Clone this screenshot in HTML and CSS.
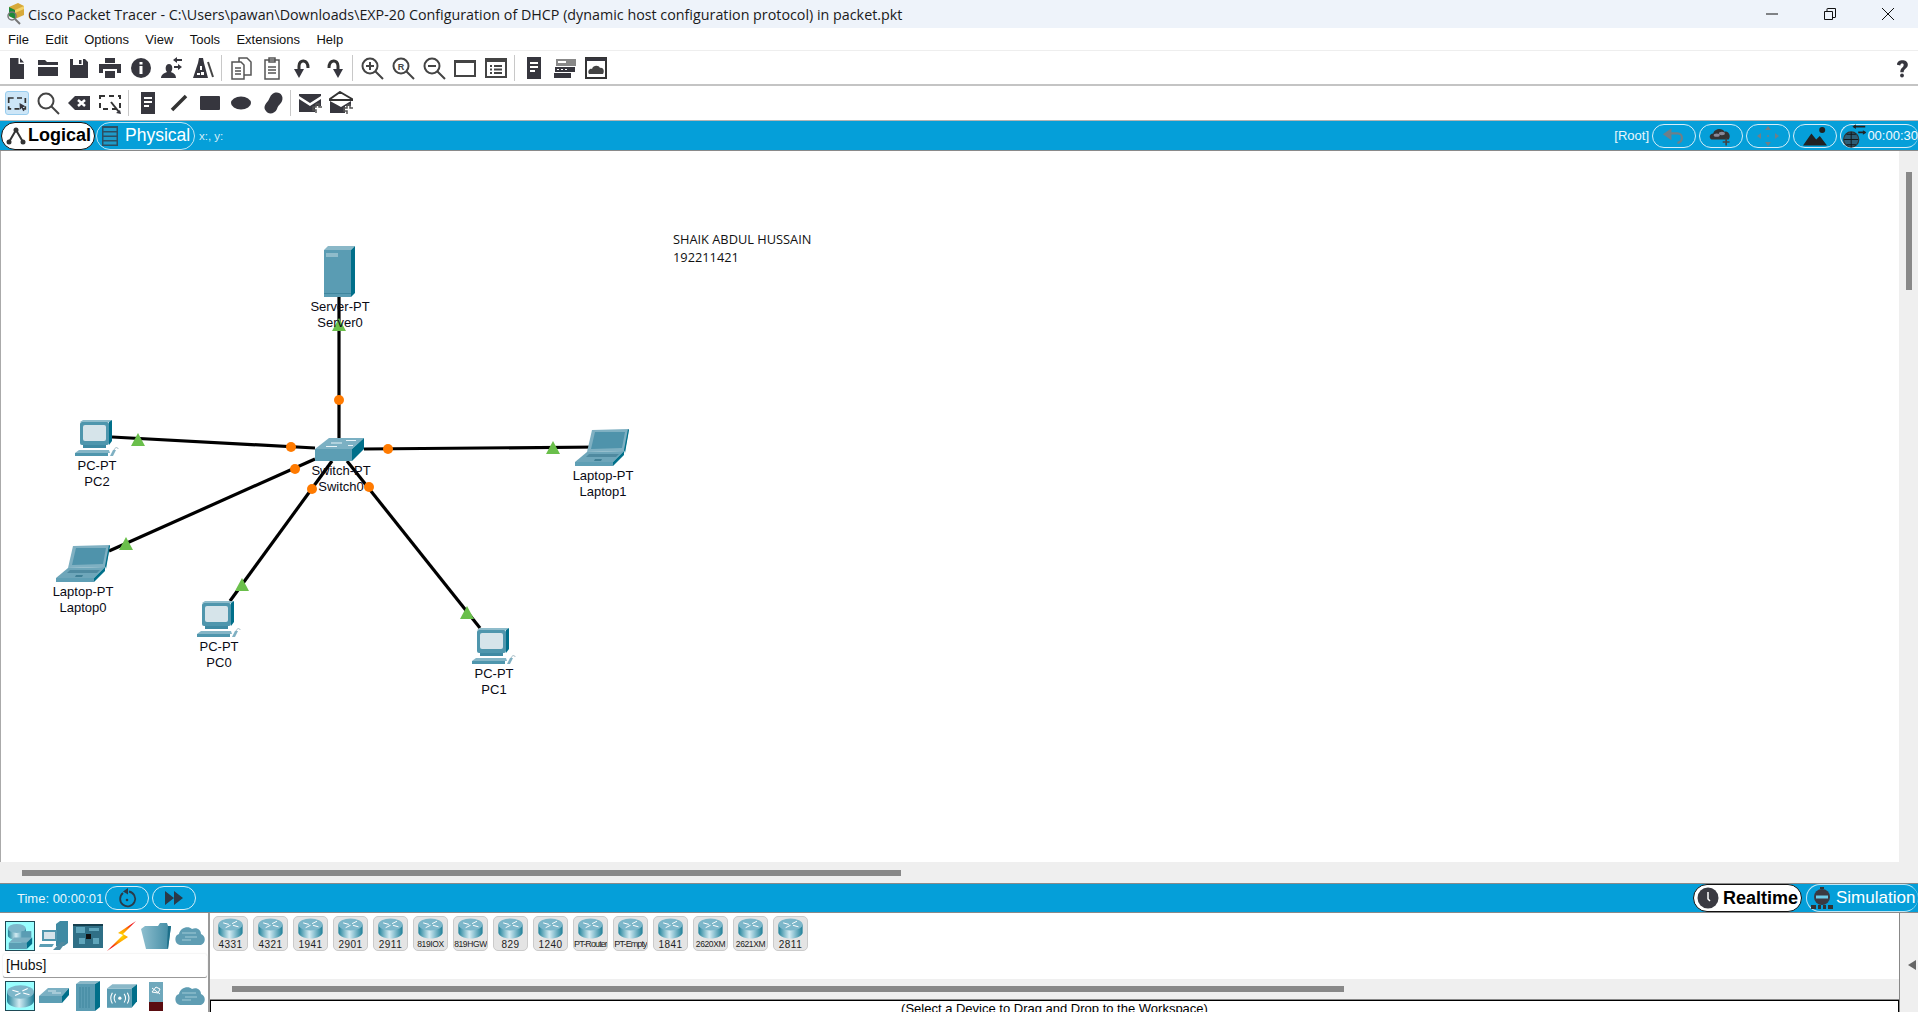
FILE: index.html
```html
<!DOCTYPE html>
<html lang="en">
<head>
<meta charset="utf-8">
<title>Cisco Packet Tracer</title>
<link rel="stylesheet" href="styles.css">
</head>
<body>
<svg class="sprite" width="0" height="0" aria-hidden="true">
  <defs>
    <linearGradient id="cyl" x1="0" x2="1" y1="0" y2="0">
      <stop offset="0" stop-color="#1f8199"/><stop offset=".45" stop-color="#d3ebf2"/><stop offset=".62" stop-color="#9ccbd9"/><stop offset="1" stop-color="#1f7f98"/>
    </linearGradient>
    <linearGradient id="teal" x1="0" x2="1" y1="0" y2="0">
      <stop offset="0" stop-color="#8fbfcf"/><stop offset="1" stop-color="#3f8aa3"/>
    </linearGradient>
    <radialGradient id="bolt"><stop offset="0" stop-color="#ffe000"/><stop offset=".55" stop-color="#ff8a00"/><stop offset="1" stop-color="#f01010"/></radialGradient>

    <symbol id="router" viewBox="0 0 30 26">
      <path d="M0 8v10c0 4 7 7.500 15 7.500S30 22 30 18V8z" fill="url(#cyl)"/>
      <ellipse cx="15" cy="8" rx="15" ry="7.500" fill="#7db7ca"/>
      <path d="M6 6l7 2M9 12l6-3M17 7l6-3M18 9l7 2" stroke="#fff" stroke-width="1.200" fill="none"/>
    </symbol>
    <symbol id="server" viewBox="0 0 31 51">
      <path d="M0 4L4 0H31L27 4z" fill="#8ab8c8"/><path d="M27 4L31 0V47L27 51z" fill="#006f8a"/>
      <rect y="4" width="27" height="47" fill="#5a9cb3"/><rect x="2" y="7" width="12" height="4" fill="#8fbccb"/><rect y="47" width="27" height="1" fill="#3f869e"/>
    </symbol>
    <symbol id="switch" viewBox="0 0 49 23">
      <path d="M0 11L14 0H49L37 11z" fill="#7bb0c3"/><rect y="11" width="37" height="12" fill="#5c9eb4"/><path d="M37 11L49 0V11L37 23z" fill="#006f8a"/>
      <path d="M16 5h11M31 2.500h10M11 8.500h11M33 7.500h5" stroke="#e8f4f8" stroke-width="1"/>
    </symbol>
    <symbol id="pc" viewBox="0 0 44 36">
      <path d="M5 2L8 0H37L34 2z" fill="#8fbccb"/><path d="M34 2L37 0V21L34 25z" fill="#006f8a"/>
      <rect x="5" y="2" width="29" height="23" rx="2" fill="#4f96ad"/><rect x="8" y="5" width="23" height="16" rx="2" fill="#d6e4ea"/>
      <rect x="8" y="25" width="23" height="3" fill="#3f8aa3"/><path d="M4 30H34L35 33H0z" fill="#84b5c6"/><rect y="33" width="33" height="3" fill="#4f96ad"/>
      <path d="M35 36l3-6h3l-3 6z" fill="#7fb0c2"/><path d="M39 30c1-3 4-3 4-1" stroke="#9fb8c2" fill="none"/>
    </symbol>
    <symbol id="laptop" viewBox="0 0 54 37">
      <path d="M17 1L54 0L50 22L12 23z" fill="#7fb0c2"/><path d="M20 3L50 3L47 19L16 20z" fill="#4f93ab"/><path d="M53 0L54 1L50 24L49 21z" fill="#00708a"/>
      <path d="M12 23L49 22L38 33H0z" fill="#6ea6ba"/><path d="M14 25H44L41 28H11z" fill="#4f8aa0"/><path d="M20 30h7l-1 2h-7z" fill="#3f7f95"/>
      <path d="M0 33H38V37H0z" fill="#5f9fb5"/><path d="M38 33L49 22V26L38 37z" fill="#00708a"/>
    </symbol>
    <symbol id="tri" viewBox="0 0 14 13"><path d="M7 0L14 13H0z" fill="#6abf4b"/></symbol>

    <symbol id="i-new" viewBox="0 0 24 24"><path d="M5 2h8.500v6H19v15H5zM15 2l4 4.500h-4z"/></symbol>
    <symbol id="i-open" viewBox="0 0 24 24"><path d="M2 4h7l2 2h11v3H2zM2 11h20v9H2z"/></symbol>
    <symbol id="i-save" viewBox="0 0 24 24"><path d="M3 3h3v6h10V3h2l3 3v16H3zM12 4h2.500v4H12z"/></symbol>
    <symbol id="i-print" viewBox="0 0 24 24"><path d="M7 2h10v5H7zM1 8h22v9h-4v-4H5v4H1zM7 15h10v7H7z"/></symbol>
    <symbol id="i-info" viewBox="0 0 24 24"><circle cx="12" cy="12" r="10"/><path d="M10.500 10h3v8h-3zM10.500 6h3v2.500h-3z" fill="#fff"/></symbol>
    <symbol id="i-wiz" viewBox="0 0 24 24"><path d="M1 22c0-3 3-5 6-6-2-2-2-8 2-8s4 6 2 8c2 1 5 2 5 6zM13 4l4-3v2h5v2h-5v2zM22 11l-4-3v2h-4v2h4v2z"/></symbol>
    <symbol id="i-pdu" viewBox="0 0 24 24"><path d="M8 2h4l1 5 4 15H2L7 7z"/><path d="M9 10h2v4H9zM6 17h3v2H6zM10 16h3v3h-3z" fill="#fff"/><path d="M17 6l5 15" stroke="#444" stroke-width="2"/></symbol>
    <symbol id="i-copy" viewBox="0 0 24 24"><g fill="none" stroke-width="1.500"><path d="M10 2h8l4 4v13H10z" stroke="#555"/><path d="M3 6h9l3 3v14H3z" fill="#fff" stroke="#555"/><path d="M6 12h6M6 15h6M6 18h6" stroke="#555"/></g></symbol>
    <symbol id="i-paste" viewBox="0 0 24 24"><g fill="none" stroke-width="1.500" stroke="#555"><path d="M5 4h14v19H5z"/><path d="M9 2h6v4H9zM8 11h8M8 14h8M8 17h8"/></g></symbol>
    <symbol id="i-undo" viewBox="0 0 24 24"><path d="M17 12c0-9-9-9-9-2v3" fill="none" stroke="#333" stroke-width="3"/><path d="M3 13h10l-5 9z"/></symbol>
    <symbol id="i-redo" viewBox="0 0 24 24"><path d="M7 12c0-9 9-9 9-2v3" fill="none" stroke="#333" stroke-width="3"/><path d="M11 13h10l-5 9z"/></symbol>
    <symbol id="i-zin" viewBox="0 0 24 24"><g fill="none" stroke="#444" stroke-width="2"><circle cx="10" cy="10" r="7.500"/><path d="M15.500 15.500L23 23M6 10h8M10 6v8"/></g></symbol>
    <symbol id="i-zr" viewBox="0 0 24 24"><g fill="none" stroke="#444" stroke-width="2"><circle cx="10" cy="10" r="7.500"/><path d="M15.500 15.500L23 23"/></g><text x="10" y="13.500" text-anchor="middle" class="ico-txt">R</text></symbol>
    <symbol id="i-zout" viewBox="0 0 24 24"><g fill="none" stroke="#444" stroke-width="2"><circle cx="10" cy="10" r="7.500"/><path d="M15.500 15.500L23 23M6 10h8"/></g></symbol>
    <symbol id="i-win" viewBox="0 0 24 24"><path d="M2 5h20v15H2z" fill="none" stroke="#444" stroke-width="2"/><path d="M2 4h20v3H2z" fill="#444"/></symbol>
    <symbol id="i-list" viewBox="0 0 24 24"><path d="M2 3h20v18H2z" fill="none" stroke="#444" stroke-width="2"/><path d="M2 3h20v3H2zM6 9h2v2H6zM10 9h8v2h-8zM6 12.500h2v2H6zM10 12.500h8v2h-8zM6 16h2v2H6zM10 16h8v2h-8z" fill="#444"/></symbol>
    <symbol id="i-note" viewBox="0 0 24 24"><path d="M5 1h14v22H5z"/><path d="M8 6h8v2H8zM8 10h8v2H8zM8 14h5v2H8z" fill="#fff"/></symbol>
    <symbol id="i-inv" viewBox="0 0 24 24"><path d="M3 3h20v7H3z" fill="#888"/><path d="M5 5h8v2H5z" fill="#fff"/><path d="M2 11h20v5H2zM1 17h17v5H1z"/><path d="M4 13h2v1H4zM8 13h2v1H8zM12 13h2v1h-2z" fill="#fff"/></symbol>
    <symbol id="i-cld" viewBox="0 0 24 24"><path d="M2 2h20v20H2z" fill="#fff" stroke="#333" stroke-width="2"/><path d="M2 2h20v3H2z"/><path d="M5 18c-2-3 1-6 3-5 1-4 7-4 8-1 3-1 5 3 3 6z" fill="#444"/></symbol>
    <symbol id="i-sel" viewBox="0 0 24 24"><path d="M2 6h20v13H2z" fill="none" stroke="#333" stroke-width="2" stroke-dasharray="6 4"/><path d="M15 12l7 4-3 1 2 4-1.500 1-2-4-2 2z"/></symbol>
    <symbol id="i-mag" viewBox="0 0 24 24"><g fill="none" stroke="#444" stroke-width="2"><circle cx="10" cy="10" r="7.500"/><path d="M15.500 15.500L23 23"/></g></symbol>
    <symbol id="i-del" viewBox="0 0 24 24"><path d="M8 5h15v14H8L1 12z"/><path d="M11 9l7 6M18 9l-7 6" stroke="#fff" stroke-width="2.500"/></symbol>
    <symbol id="i-res" viewBox="0 0 24 24"><path d="M2 5h20v13H2z" fill="none" stroke="#333" stroke-width="2" stroke-dasharray="5 4"/><path d="M13 11l8 10" stroke="#333" stroke-width="2"/><path d="M23 23l-5-1 4-3z"/></symbol>
    <symbol id="i-line" viewBox="0 0 24 24"><path d="M5 19L19 5" stroke="#333" stroke-width="3.500"/></symbol>
    <symbol id="i-rect" viewBox="0 0 24 24"><rect x="2" y="5" width="20" height="14" rx="1"/></symbol>
    <symbol id="i-ell" viewBox="0 0 24 24"><ellipse cx="12" cy="12" rx="10" ry="6.500"/></symbol>
    <symbol id="i-free" viewBox="0 0 24 24"><path d="M14 2c6-2 10 3 8 8-1 3-4 4-5 8-2 5-9 6-11 2-3-3-1-7 2-10 2-3 2-6 6-8z"/></symbol>
    <symbol id="i-mail" viewBox="0 0 24 24"><path d="M1 3h22v2L12 12 1 5zM1 8l11 7 11-7v7h-6v6H1z"/><path d="M19 15h3v3h3M19 15v3h-3v3h3v3" fill="none" stroke="#555" stroke-width="1.500" transform="translate(-1 -2)"/></symbol>
    <symbol id="i-mailo" viewBox="0 0 24 24"><path d="M11 1L23 8v1H1V8z" fill="none" stroke="#333" stroke-width="2"/><path d="M1 10l11 6 10-6v5h-6v7H1z"/><path d="M19 15h3v3h3M19 15v3h-3v3h3v3" fill="none" stroke="#555" stroke-width="1.500" transform="translate(-1 -1)"/></symbol>
    <symbol id="i-help" viewBox="0 0 24 24"><path d="M6 8c0-7 13-7 13 0 0 5-5 4-5 9h-4c0-6 4-5 4-9 0-2-4-2-4 1z"/><circle cx="12" cy="21" r="2.300"/></symbol>

    <symbol id="b-logical" viewBox="0 0 20 20"><path d="M10 4L3 16M10 4l7 12" stroke="#333" stroke-width="2" fill="none"/><circle cx="10" cy="4" r="2.500" fill="#333"/><circle cx="3" cy="16" r="2.500" fill="#333"/><circle cx="17" cy="16" r="2.500" fill="#333"/></symbol>
    <symbol id="b-rack" viewBox="0 0 16 20"><path d="M0 0h16v20H0z" fill="#2c4f63"/><path d="M1.500 2h13v3h-13zM1.500 6.500h13v3h-13zM1.500 11h13v3h-13zM1.500 15.500h13v3h-13z" fill="#1f9bc9"/></symbol>
    <symbol id="b-back" viewBox="0 0 28 20"><path d="M1 8L11 1v14z" fill="#6f7f88"/><path d="M10 7h8c7 0 7 10 0 11" fill="none" stroke="#6f7f88" stroke-width="2.500"/></symbol>
    <symbol id="b-cloud" viewBox="0 0 28 22"><path d="M3 15c-4-2-2-7 2-7 1-6 11-7 13-2 5-1 8 5 5 9z" fill="#333"/><ellipse cx="9" cy="10" rx="3.500" ry="2" fill="#889"/><ellipse cx="15" cy="8" rx="3.500" ry="2" fill="#889"/><path d="M20 14v8M16 18h8" stroke="#444" stroke-width="2"/></symbol>
    <symbol id="b-move" viewBox="0 0 22 20"><path d="M11 0l3 4H8zM11 20l-3-4h6zM0 10l4-3v6zM22 10l-4 3V7z" fill="#6f7f88"/><circle cx="11" cy="10" r="1" fill="#6f7f88"/></symbol>
    <symbol id="b-mount" viewBox="0 0 20 16"><path d="M0 16L7 6l4 5 3-3 6 8z" fill="#222"/><circle cx="16" cy="3" r="2.500" fill="#222"/></symbol>
    <symbol id="b-globe" viewBox="0 0 20 20"><circle cx="7" cy="13" r="6.500" fill="#2d5f78" stroke="#333"/><path d="M1 13h12M7 6.500v13M3 8.500h8M3 17.500h8" stroke="#111" stroke-width=".8" fill="none"/><path d="M10 2h9M13 7h6" stroke="#222" stroke-width="1.500"/><path d="M8 2l3-2v4zM20 7l-3-2v4z" fill="#222"/></symbol>
    <symbol id="b-timer" viewBox="0 0 20 22"><path d="M6 6a7.500 7.500 0 1 0 6-1.500" fill="none" stroke="#2a3a48" stroke-width="1.800"/><path d="M11 1l-5 3.500 5 3z" fill="#2a3a48"/><circle cx="10" cy="13" r="1.300" fill="#2a3a48"/></symbol>
    <symbol id="b-ff" viewBox="0 0 20 14"><path d="M1 0l9 7-9 7zM10 0l9 7-9 7z" fill="#2a3a48"/></symbol>
    <symbol id="b-clock" viewBox="0 0 22 22"><circle cx="11" cy="11" r="10.500" fill="#3a3a42"/><path d="M11 5v7l2 2" stroke="#fff" stroke-width="1.500" fill="none"/></symbol>
    <symbol id="b-train" viewBox="0 0 22 22"><path d="M9 0h4v2H9z" fill="#333"/><circle cx="11" cy="10" r="8" fill="#3a3a42"/><path d="M5 8.500h12v3H5z" fill="#6ccbe8"/><path d="M0 18h5v4H0zM7 18h3v4H7zM12 18h3v4h-3zM17 18h5v4h-5z" fill="#333"/></symbol>

    <symbol id="c-combo" viewBox="0 0 30 30"><path d="M1 6v8c0 3 5 5 10 5s10-2 10-5V6z" fill="url(#cyl)"/><ellipse cx="11" cy="6" rx="10" ry="5" fill="#7db7ca"/><path d="M16 9h11v15H16z" fill="#5a9cb3"/><path d="M2 22L8 16H28L22 22z" fill="#7bb0c3"/><path d="M2 22h20v7H2z" fill="#5c9eb4"/><path d="M22 22l6-6v7l-6 6z" fill="#006f8a"/></symbol>
    <symbol id="c-end" viewBox="0 0 30 30"><path d="M17 3l4-3h8v22l-4 3h-8z" fill="#3f8aa3"/><path d="M3 9h15v11H3z" fill="#4f96ad"/><path d="M5 11h11v7H5z" fill="#d6e4ea"/><path d="M1 23h14l-2 3H0z" fill="#5c9eb4"/><path d="M14 29l8-8h5l-6 8z" fill="#4f8aa0"/></symbol>
    <symbol id="c-board" viewBox="0 0 30 24"><path d="M0 0h30v24H0z" fill="#2f6f86"/><path d="M3 3h9v6H3zM16 4h10v3H16zM6 14h6v6H6zM20 14h6v6h-6z" fill="#5fa5bb"/><path d="M13 10h5v5h-5z" fill="#111"/><path d="M0 0h30v2H0z" fill="#163f4e"/></symbol>
    <symbol id="c-bolt" viewBox="0 0 30 30"><path d="M29 0L11 12l5 2L0 30l21-14-5-3z" fill="url(#bolt)"/></symbol>
    <symbol id="c-folder" viewBox="0 0 30 26"><path d="M4 3h13l2-3h7l1 3h3l-3 23H5L0 6z" fill="url(#teal)"/><path d="M27 3h3l-3 23-1-2z" fill="#1d6f89"/></symbol>
    <symbol id="c-cloud" viewBox="0 0 30 22"><path d="M5 20C-1 19-1 10 4 9c1-6 9-9 13-5 5-2 9 1 9 5 5 2 5 9 0 11z" fill="#5f9db3"/><path d="M7 8h14M10 12h12M7 15h9" stroke="#8cbccb" stroke-width="1.500"/></symbol>
    <symbol id="c-sw" viewBox="0 0 30 16"><path d="M0 8L9 0H30L23 8z" fill="#7bb0c3"/><path d="M0 8h23v7H0z" fill="#5c9eb4"/><path d="M23 8l7-8v7l-7 8z" fill="#006f8a"/><path d="M9 3h8M13 5h9" stroke="#e8f4f8" stroke-width=".8"/></symbol>
    <symbol id="c-hub" viewBox="0 0 24 30"><path d="M0 3h19v27H0z" fill="#5a9cb3"/><path d="M0 3l4-3h20l-5 3z" fill="#8ab8c8"/><path d="M19 3l5-3v26l-5 4z" fill="#006f8a"/><path d="M4 6v21M7 6v21M10 6v21M13 6v21" stroke="#3f869e" stroke-width="1"/></symbol>
    <symbol id="c-wifi" viewBox="0 0 28 22"><path d="M0 4h23v18H0z" fill="#5a9cb3"/><path d="M0 4l5-4h23l-5 4z" fill="#8ab8c8"/><path d="M23 4l5-4v16l-5 6z" fill="#006f8a"/><circle cx="12" cy="13" r="1.500" fill="#fff"/><path d="M8 9c-2 3-2 5 0 8M16 9c2 3 2 5 0 8M5 8c-2 4-2 6 0 10M19 8c2 4 2 6 0 10" stroke="#fff" fill="none"/></symbol>
    <symbol id="c-sec" viewBox="0 0 16 30"><path d="M1 1h14v20H1z" fill="#6fa8bc"/><path d="M4 7l8 6M4 11l4-5 4 2-2 4z" stroke="#fff" fill="none"/><path d="M1 21h14v9H1z" fill="#5a0c10"/></symbol>
  </defs>
</svg>

<header class="titlebar">
  <svg class="app-logo" viewBox="0 0 20 22"><path d="M3 4l9-4 6 3v9l-9 4-6-3z" fill="#d7a93a"/><path d="M3 4l6 3v9l-6-3z" fill="#1d8a3a"/><path d="M9 7l9-4v3l-9 4z" fill="#f3d36b"/><circle cx="6" cy="13" r="4" fill="none" stroke="#777" stroke-width="1.500"/><path d="M9 16l5 5" stroke="#777" stroke-width="2"/></svg>
  <span class="title-text">Cisco Packet Tracer - C:\Users\pawan\Downloads\EXP-20 Configuration of DHCP (dynamic host configuration protocol) in packet.pkt</span>
  <div class="winctl">
    <svg class="w-btn w-min" viewBox="0 0 12 12"><path d="M0 6h12" stroke="#111" stroke-width="1"/></svg>
    <svg class="w-btn w-max" viewBox="0 0 12 12"><path d="M.5 3.500h8v8h-8zM3 3V1q0-.5.5-.5h8V9q0 .5-.5.500H9" fill="none" stroke="#111" stroke-width="1"/></svg>
    <svg class="w-btn w-close" viewBox="0 0 12 12"><path d="M0 0l12 12M12 0L0 12" stroke="#111" stroke-width="1"/></svg>
  </div>
</header>

<nav class="menubar"><span>File</span><span>Edit</span><span>Options</span><span>View</span><span>Tools</span><span>Extensions</span><span>Help</span></nav>

<div class="toolbar tb-main">
  <button class="tool"><svg><use href="#i-new"/></svg></button>
  <button class="tool"><svg><use href="#i-open"/></svg></button>
  <button class="tool"><svg><use href="#i-save"/></svg></button>
  <button class="tool"><svg><use href="#i-print"/></svg></button>
  <button class="tool"><svg><use href="#i-info"/></svg></button>
  <button class="tool"><svg><use href="#i-wiz"/></svg></button>
  <button class="tool"><svg><use href="#i-pdu"/></svg></button>
  <i class="sep"></i>
  <button class="tool"><svg><use href="#i-copy"/></svg></button>
  <button class="tool"><svg><use href="#i-paste"/></svg></button>
  <button class="tool"><svg><use href="#i-undo"/></svg></button>
  <button class="tool"><svg><use href="#i-redo"/></svg></button>
  <i class="sep"></i>
  <button class="tool"><svg><use href="#i-zin"/></svg></button>
  <button class="tool"><svg><use href="#i-zr"/></svg></button>
  <button class="tool"><svg><use href="#i-zout"/></svg></button>
  <button class="tool"><svg><use href="#i-win"/></svg></button>
  <button class="tool"><svg><use href="#i-list"/></svg></button>
  <i class="sep"></i>
  <button class="tool"><svg><use href="#i-note"/></svg></button>
  <button class="tool"><svg><use href="#i-inv"/></svg></button>
  <button class="tool"><svg><use href="#i-cld"/></svg></button>
  <button class="tool tool-help"><svg><use href="#i-help"/></svg></button>
</div>

<div class="toolbar tb-draw">
  <button class="tool tool-on"><svg><use href="#i-sel"/></svg></button>
  <button class="tool"><svg><use href="#i-mag"/></svg></button>
  <button class="tool"><svg><use href="#i-del"/></svg></button>
  <button class="tool"><svg><use href="#i-res"/></svg></button>
  <i class="sep"></i>
  <button class="tool"><svg><use href="#i-note"/></svg></button>
  <button class="tool"><svg><use href="#i-line"/></svg></button>
  <button class="tool"><svg><use href="#i-rect"/></svg></button>
  <button class="tool"><svg><use href="#i-ell"/></svg></button>
  <button class="tool"><svg><use href="#i-free"/></svg></button>
  <i class="sep"></i>
  <button class="tool"><svg><use href="#i-mail"/></svg></button>
  <button class="tool"><svg><use href="#i-mailo"/></svg></button>
</div>

<div class="bluebar bar-top">
  <div class="pill pill-on pill-logical"><svg class="pill-ico"><use href="#b-logical"/></svg><span>Logical</span></div>
  <div class="pill pill-off pill-physical"><svg class="pill-rack"><use href="#b-rack"/></svg><span>Physical</span></div>
  <span class="coords">x:, y:</span>
  <div class="bar-right">
    <span class="root">[Root]</span>
    <div class="mini"><svg class="m-ico"><use href="#b-back"/></svg></div>
    <div class="mini"><svg class="m-ico"><use href="#b-cloud"/></svg></div>
    <div class="mini"><svg class="m-ico"><use href="#b-move"/></svg></div>
    <div class="mini"><svg class="m-ico"><use href="#b-mount"/></svg></div>
    <div class="mini mini-time"><svg class="m-ico"><use href="#b-globe"/></svg><span>00:00:30</span></div>
  </div>
</div>

<main class="workspace">
  <div class="canvas">
    <svg class="links" viewBox="0 151 1899 711">
      <g stroke="#000" stroke-width="3.200" fill="none">
        <path d="M339 297V438"/>
        <path d="M364 449L600 447"/>
        <path d="M347 461L480 628"/>
        <path d="M332 461L230 601"/>
        <path d="M315 459L109 551"/>
        <path d="M315 448L112 437"/>
      </g>
      <use href="#server" x="324" y="246" width="31" height="51"/>
      <use href="#switch" x="315" y="438" width="49" height="23"/>
      <use href="#laptop" x="575" y="429" width="54" height="37"/>
      <use href="#pc" x="472" y="628" width="44" height="36"/>
      <use href="#pc" x="197" y="601" width="44" height="36"/>
      <use href="#laptop" x="56" y="545" width="54" height="37"/>
      <use href="#pc" x="75" y="420" width="44" height="36"/>
      <use href="#tri" x="332" y="318" width="14" height="13"/>
      <use href="#tri" x="546" y="441" width="14" height="13"/>
      <use href="#tri" x="460" y="606" width="14" height="13"/>
      <use href="#tri" x="235" y="578" width="14" height="13"/>
      <use href="#tri" x="119" y="537" width="14" height="13"/>
      <use href="#tri" x="131" y="433" width="14" height="13"/>
      <g fill="#ff7a00">
        <circle cx="339" cy="400" r="5"/><circle cx="388" cy="449" r="5"/><circle cx="369" cy="487" r="5"/>
        <circle cx="312" cy="489" r="5"/><circle cx="295" cy="469" r="5"/><circle cx="291" cy="447" r="5"/>
      </g>
    </svg>
    <div class="node n-server">Server-PT<br>Server0</div>
    <div class="node n-switch">Switch-PT<br>Switch0</div>
    <div class="node n-laptop1">Laptop-PT<br>Laptop1</div>
    <div class="node n-pc1">PC-PT<br>PC1</div>
    <div class="node n-pc0">PC-PT<br>PC0</div>
    <div class="node n-laptop0">Laptop-PT<br>Laptop0</div>
    <div class="node n-pc2">PC-PT<br>PC2</div>
    <div class="note">SHAIK ABDUL HUSSAIN<br>192211421</div>
  </div>
  <div class="vscroll"><div class="vthumb"></div></div>
</main>
<div class="hscroll"><div class="hthumb"></div></div>

<div class="bluebar bar-bottom">
  <span class="time">Time: 00:00:01</span>
  <div class="mini mini-low"><svg class="t-ico"><use href="#b-timer"/></svg></div>
  <div class="mini mini-low"><svg class="f-ico"><use href="#b-ff"/></svg></div>
  <div class="bar-right">
    <div class="pill pill-on pill-real"><svg class="clock"><use href="#b-clock"/></svg><span>Realtime</span></div>
    <div class="pill pill-off pill-sim"><svg class="clock"><use href="#b-train"/></svg><span>Simulation</span></div>
  </div>
</div>

<section class="panel">
  <aside class="cats">
    <div class="cat-row">
      <div class="cat cat-on"><svg class="c30"><use href="#c-combo"/></svg></div>
      <div class="cat"><svg class="c30"><use href="#c-end"/></svg></div>
      <div class="cat"><svg class="c30"><use href="#c-board"/></svg></div>
      <div class="cat"><svg class="c30"><use href="#c-bolt"/></svg></div>
      <div class="cat"><svg class="c30"><use href="#c-folder"/></svg></div>
      <div class="cat"><svg class="c30"><use href="#c-cloud"/></svg></div>
    </div>
    <div class="cat-label">[Hubs]</div>
    <div class="cat-row">
      <div class="cat cat-on"><svg class="c30"><use href="#router"/></svg></div>
      <div class="cat"><svg class="c30"><use href="#c-sw"/></svg></div>
      <div class="cat"><svg class="c30"><use href="#c-hub"/></svg></div>
      <div class="cat"><svg class="c30"><use href="#c-wifi"/></svg></div>
      <div class="cat"><svg class="c30"><use href="#c-sec"/></svg></div>
      <div class="cat"><svg class="c30"><use href="#c-cloud"/></svg></div>
    </div>
  </aside>
  <div class="devices">
    <div class="tiles">
      <div class="tile"><svg><use href="#router"/></svg><span>4331</span></div>
      <div class="tile"><svg><use href="#router"/></svg><span>4321</span></div>
      <div class="tile"><svg><use href="#router"/></svg><span>1941</span></div>
      <div class="tile"><svg><use href="#router"/></svg><span>2901</span></div>
      <div class="tile"><svg><use href="#router"/></svg><span>2911</span></div>
      <div class="tile"><svg><use href="#router"/></svg><span class="narrow">819IOX</span></div>
      <div class="tile"><svg><use href="#router"/></svg><span class="narrow">819HGW</span></div>
      <div class="tile"><svg><use href="#router"/></svg><span>829</span></div>
      <div class="tile"><svg><use href="#router"/></svg><span>1240</span></div>
      <div class="tile"><svg><use href="#router"/></svg><span class="tight">PT-Router</span></div>
      <div class="tile"><svg><use href="#router"/></svg><span class="tight">PT-Empty</span></div>
      <div class="tile"><svg><use href="#router"/></svg><span>1841</span></div>
      <div class="tile"><svg><use href="#router"/></svg><span class="narrow">2620XM</span></div>
      <div class="tile"><svg><use href="#router"/></svg><span class="narrow">2621XM</span></div>
      <div class="tile"><svg><use href="#router"/></svg><span>2811</span></div>
    </div>
    <div class="dscroll"><div class="dthumb"></div></div>
    <div class="hint"><span>(Select a Device to Drag and Drop to the Workspace)</span></div>
  </div>
  <div class="collapse"><span class="arrow"></span></div>
</section>
</body>
</html>
```

FILE: styles.css
```css
* { box-sizing: border-box; }
html, body { margin: 0; padding: 0; }
body {
  width: 1918px; height: 1012px; overflow: hidden; background: #fff;
  display: flex; flex-direction: column;
  font-family: "Liberation Sans", Arial, sans-serif; color: #000;
}
.sprite { position: absolute; }
.ico-txt { font: bold 9px "Liberation Sans", sans-serif; fill: #444; }

.titlebar { height: 28px; flex: none; background: #eef3fa; display: flex; align-items: center; position: relative; }
.app-logo { width: 20px; height: 22px; margin-left: 6px; flex: none; }
.title-text { margin-left: 2px; font: 14.3px "Open Sans", sans-serif; white-space: nowrap; color: #1a1a1a; }
.winctl { margin-left: auto; display: flex; align-items: center; padding-right: 24px; gap: 46px; }
.w-btn { width: 12px; height: 12px; display: block; }

.menubar { height: 23px; flex: none; display: flex; gap: 16.4px; padding-left: 8px; align-items: center; font-size: 13px; border-bottom: 1px solid #eee; color: #111; }

.toolbar { flex: none; display: flex; align-items: center; padding-left: 1px; }
.tb-main { height: 35px; border-bottom: 2px solid #c4c4c4; }
.tb-draw { height: 34px; }
.tool { width: 31px; height: 30px; padding: 0; border: 0; background: none; display: flex; align-items: center; justify-content: center; }
.tool svg { width: 24px; height: 24px; fill: #36363e; display: block; }
.tool-on { width: 24px; height: 24px; margin: 0 3px 0 4px; background: #cde6f7; border: 1px solid #99cdee; border-radius: 3px; }
.tool-on svg { width: 20px; height: 20px; }
.tool-help { margin-left: auto; margin-right: 1px; }
.tool-help svg { width: 20px; height: 20px; }
.sep { width: 1px; height: 26px; background: #c8c8c8; margin: 0 3px; flex: none; }

.bluebar { flex: none; background: #059fd9; display: flex; align-items: center; color: #fff; }
.bar-top { height: 31px; border-top: 1px solid #b5b5b5; border-bottom: 1px solid #8a8a8a; padding-left: 1px; }
.bar-bottom { height: 30px; border-top: 1px solid #8a8a8a; border-bottom: 1px solid #8a8a8a; padding-left: 17px; }
.bar-right { margin-left: auto; display: flex; align-items: center; height: 100%; }

.pill { height: 28px; border-radius: 14px; display: flex; align-items: center; flex: none; font-size: 18px; }
.pill-on { background: #fff; border: 1px solid #111; color: #000; font-weight: bold; }
.pill-off { border: 1px solid #bfe6f5; color: #fff; font-size: 17.5px; }
.pill-logical { width: 94px; padding-left: 4px; gap: 2px; }
.pill-ico { width: 20px; height: 20px; }
.pill-physical { width: 99px; margin-left: 1px; padding-left: 5px; gap: 7px; }
.pill-rack { width: 16px; height: 20px; }
.coords { margin-left: 4px; font-size: 11.5px; color: #d5eef8; }

.root { font-size: 13px; margin-right: 0; color: #eaf7fc; }
.mini { width: 44px; height: 24px; border: 1px solid #d5eef8; border-radius: 12px; margin-left: 3px; display: flex; align-items: center; justify-content: center; flex: none; }
.m-ico { width: 24px; height: 20px; }
.mini-time { width: 78px; justify-content: flex-start; font-size: 13px; margin-left: 3px; gap: 1px; border-right: 0; color: #f2fbff; white-space: nowrap; }
.mini-time .m-ico { width: 24px; height: 24px; margin-left: 2px; }
.time { font-size: 13px; color: #eaf7fc; width: 87px; white-space: nowrap; }
.mini-low { margin-left: 3px; }
.mini-low:first-of-type { margin-left: 1px; }
.t-ico { width: 20px; height: 22px; }
.f-ico { width: 20px; height: 14px; }

.workspace { height: 711px; flex: none; display: flex; }
.canvas { flex: 1; position: relative; background: #fff; box-shadow: inset 1px 0 #aaa; overflow: hidden; }
.links { position: absolute; left: 0; top: 0; width: 1899px; height: 711px; }
.node { position: absolute; width: 100px; text-align: center; font-size: 13px; line-height: 16px; color: #0a0a14; }
.n-server { left: 290px; top: 148px; }
.n-switch { left: 291px; top: 312px; }
.n-laptop1 { left: 553px; top: 317px; }
.n-pc1 { left: 444px; top: 515px; }
.n-pc0 { left: 169px; top: 488px; }
.n-laptop0 { left: 33px; top: 433px; }
.n-pc2 { left: 47px; top: 307px; }
.note { position: absolute; left: 673px; top: 79px; font: 12.8px/18px "Open Sans", sans-serif; color: #111; white-space: nowrap; }

.vscroll { width: 19px; flex: none; background: #efefef; padding: 21px 0 0 7px; }
.vthumb { width: 6px; height: 118px; background: #888; }
.hscroll { height: 21px; flex: none; background: #efefef; padding: 8px 0 0 22px; }
.hthumb { width: 879px; height: 6px; background: #888; }

.pill-real { width: 109px; height: 28px; padding-left: 3px; gap: 4px; }
.pill-sim { width: 112px; height: 28px; margin-left: 4px; padding-left: 4px; gap: 3px; border-right: 0; white-space: nowrap; font-size: 17px; }
.clock { width: 22px; height: 22px; flex: none; }

.panel { height: 99px; flex: none; display: flex; }
.cats { width: 210px; flex: none; border-right: 2px solid #999; padding: 8px 0 0 0; background: #fff; }
.cat-row { display: flex; height: 30px; padding-left: 5px; gap: 4px; }
.cat { width: 30px; height: 30px; flex: none; display: flex; align-items: center; justify-content: center; }
.cat-on { background: #99ffff; border: 1px solid #1e4a56; }
.c30 { width: 30px; height: 30px; }
.cat-on .c30 { width: 27px; height: 27px; }
.cat-label { margin: 3px 0 4px 3px; width: 204px; height: 23px; font-size: 14px; line-height: 22px; padding-left: 3px; border-radius: 2px; background: #fff; box-shadow: 0 1px 0 #999, 0 0 2px #ddd; color: #111; }

.devices { flex: 1; display: flex; flex-direction: column; border-right: 1px solid #888; min-width: 0; }
.tiles { height: 66px; display: flex; gap: 5px; padding: 3px 0 0 3px; align-items: flex-start; }
.tile { width: 35px; height: 35px; background: #e4e4e4; border: 1px solid #cbcbcb; border-radius: 5px; display: flex; flex-direction: column; align-items: center; flex: none; overflow: hidden; }
.tile svg { width: 29px; height: 21px; margin-top: 1px; display: block; flex: none; }
.tile span { font-size: 10px; line-height: 11px; color: #222; white-space: nowrap; letter-spacing: .5px; }
.tile .narrow { font-size: 8.5px; letter-spacing: -.4px; }
.tile .tight { font-size: 9px; letter-spacing: -.9px; }
.dscroll { height: 21px; background: #efefef; border-bottom: 1px solid #888; padding: 7px 0 0 22px; flex: none; }
.dthumb { width: 1112px; height: 6px; background: #888; }
.hint { flex: 1; border: 1px solid #000; border-width: 1px 1px 0 1px; overflow: hidden; text-align: center; font-size: 13px; line-height: 16px; padding-right: 0; min-height: 0; height: 12px; }
.collapse { width: 18px; flex: none; background: #efefef; display: flex; justify-content: flex-end; padding: 47px 0 0 0; }
.arrow { width: 0; height: 0; border: 5px solid transparent; border-right: 8px solid #666; border-left: 0; margin-right: 2px; }
```
